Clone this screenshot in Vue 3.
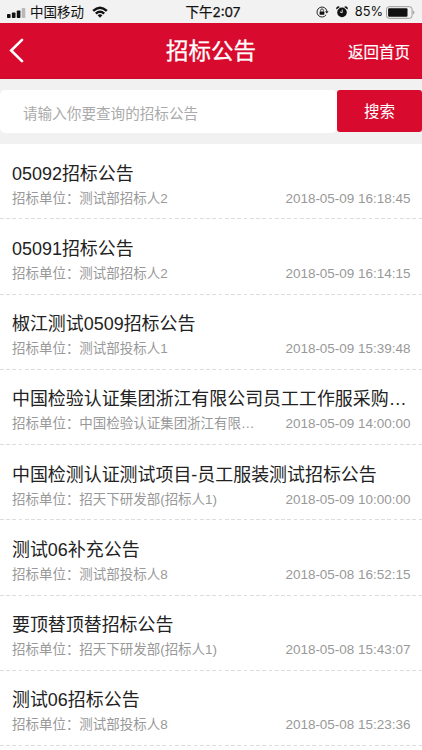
<script setup>
import { ref } from 'vue';

const keyword = ref('');

const notices = [
    { title: '05092招标公告', unit: '测试部招标人2', time: '2018-05-09 16:18:45' },
    { title: '05091招标公告', unit: '测试部招标人2', time: '2018-05-09 16:14:15' },
    { title: '椒江测试0509招标公告', unit: '测试部投标人1', time: '2018-05-09 15:39:48' },
    { title: '中国检验认证集团浙江有限公司员工工作服采购招标公告', unit: '中国检验认证集团浙江有限公司', time: '2018-05-09 14:00:00' },
    { title: '中国检测认证测试项目-员工服装测试招标公告', unit: '招天下研发部(招标人1)', time: '2018-05-09 10:00:00' },
    { title: '测试06补充公告', unit: '测试部投标人8', time: '2018-05-08 16:52:15' },
    { title: '要顶替顶替招标公告', unit: '招天下研发部(招标人1)', time: '2018-05-08 15:43:07' },
    { title: '测试06招标公告', unit: '测试部投标人8', time: '2018-05-08 15:23:36' },
];
</script>

<template>
    <div class="page" lang="zh-CN">
        <div class="status">
            <div class="status-side">
                <svg class="signal" width="19" height="10" viewBox="0 0 19 10">
                    <rect x="0" y="6" width="3.6" height="4" rx="0.8" />
                    <rect x="4.9" y="4.4" width="3.6" height="5.6" rx="0.8" />
                    <rect x="9.8" y="2.4" width="3.6" height="7.6" rx="0.8" />
                    <rect x="14.7" y="0" width="3.6" height="10" rx="0.8" fill="#b9b9b9" />
                </svg>
                <span class="carrier">中国移动</span>
                <svg class="wifi" width="16" height="12" viewBox="0 0 16 12">
                    <path d="M0.3 4.1Q8-3.1 15.7 4.1L14 5.8Q8 .2 2 5.8Z" />
                    <path d="M3 6.8Q8 2.3 13 6.8L11.3 8.4Q8 5.6 4.7 8.4Z" />
                    <path d="M5.6 9.3Q8 7.3 10.4 9.3L8 11.7Z" />
                </svg>
            </div>
            <span class="clock">下午2:07</span>
            <div class="status-side status-right">
                <svg width="13" height="12" viewBox="0 0 13 12">
                    <path d="M10.1 8.9A5 5 0 1 1 10.9 5" fill="none" stroke="#111" stroke-width="0.9" />
                    <path d="M9 5.2h3.6l-1.8 2.3z" />
                    <rect x="3.6" y="5.4" width="4.8" height="3.3" rx="0.4" />
                    <path d="M4.6 5.6V4.3a1.4 1.4 0 0 1 2.8 0v1.3" fill="none" stroke="#111" stroke-width="0.8" />
                </svg>
                <svg class="alarm" width="12" height="12" viewBox="0 0 12 12">
                    <circle cx="6" cy="6.4" r="4.8" />
                    <path d="M.5 3.4A2.1 2.1 0 0 1 3.8.9zM11.5 3.4A2.1 2.1 0 0 0 8.2.9z" />
                    <path d="M6.2 3.6v3.1L3.9 5.9" fill="none" stroke="#f2f2f2" stroke-width="0.9" />
                </svg>
                <span class="percent">85%</span>
                <svg class="battery" width="29" height="13" viewBox="0 0 29 13">
                    <rect x="0.5" y="0.7" width="25.6" height="11.6" rx="2.6" fill="none" stroke="#999" stroke-width="1" />
                    <rect x="2.1" y="2.2" width="19.4" height="8.6" rx="1" />
                    <path d="M27.2 4.6q1.2.6 1.2 1.9t-1.2 1.9z" fill="#999" />
                </svg>
            </div>
        </div>

        <header class="nav">
            <a class="back">
                <svg width="15" height="25" viewBox="0 0 15 25">
                    <path d="M13 1.8 2.2 12.5 13 23.2" fill="none" stroke="#fff" stroke-width="2.6" stroke-linecap="round" />
                </svg>
            </a>
            <h1>招标公告</h1>
            <a class="home">返回首页</a>
        </header>

        <form class="search" @submit.prevent>
            <input v-model="keyword" type="text" placeholder="请输入你要查询的招标公告" />
            <button type="submit">搜索</button>
        </form>

        <ul class="list">
            <li v-for="item in notices" :key="item.time" class="item">
                <h2>{{ item.title }}</h2>
                <div class="meta">
                    <span class="unit">招标单位：{{ item.unit }}</span>
                    <span class="time">{{ item.time }}</span>
                </div>
            </li>
        </ul>
    </div>
</template>

<style>
body {
    background: #fff;
    overflow: hidden;
}
</style>

<style scoped>
.page {
    height: 750px;
    overflow: hidden;
    background: #fff;
    font-family: "Liberation Sans", "Noto Sans CJK SC", sans-serif;
    color: #222;
}

.status {
    box-sizing: border-box;
    height: 23px;
    padding: 1px 7px 0;
    display: grid;
    grid-template-columns: 1fr auto 1fr;
    align-items: center;
    background: #f2f2f2;
    color: #111;
    font-size: 13.5px;
    line-height: 22px;
    white-space: nowrap;
}

.status svg {
    flex: none;
    fill: #111;
}

.status-side {
    display: flex;
    align-items: center;
}

.status-right {
    justify-content: flex-end;
}

.signal {
    margin-top: 2px;
}

.carrier {
    margin-left: 4px;
    padding-top: 1px;
    line-height: 21px;
}

.wifi {
    margin-left: 8px;
}

.clock {
    padding-left: 4px;
    font-family: Inter, "Noto Sans CJK SC", sans-serif;
    font-size: 13.5px;
    -webkit-text-stroke: 0.25px #111;
}

.alarm {
    margin-left: 7px;
}

.percent {
    margin-left: 7px;
    font-family: Inter, sans-serif;
    font-size: 12.8px;
}

.battery {
    margin-left: 3px;
}

.nav {
    box-sizing: border-box;
    height: 56px;
    padding: 0 12px 0 9px;
    display: grid;
    grid-template-columns: 1fr auto 1fr;
    align-items: center;
    background: #d80b2e;
    border-bottom: 1px solid #c40f2d;
    color: #fff;
}

.back {
    display: flex;
}

.nav h1 {
    margin: 0;
    padding: 2px 0 0 3px;
    font-size: 22.5px;
    font-weight: 400;
    line-height: 30px;
    -webkit-text-stroke: 0.3px #fff;
}

.home {
    justify-self: end;
    font-size: 15.5px;
    -webkit-text-stroke: 0.2px #fff;
}

.search {
    box-sizing: border-box;
    height: 65px;
    padding-top: 11px;
    display: flex;
    align-items: flex-start;
    background: #f1f1f1;
}

.search input {
    box-sizing: border-box;
    flex: 1;
    min-width: 0;
    height: 43px;
    padding: 4px 23px 0;
    border: 0;
    border-radius: 5px;
    outline: 0;
    background: #fff;
    font: 14.6px "Liberation Sans", "Noto Sans CJK SC", sans-serif;
}

.search input::placeholder {
    color: #aaa;
}

.search button {
    width: 85px;
    height: 41.5px;
    padding: 0 0 2px;
    border: 0;
    border-radius: 3px;
    background: #d80b2e;
    color: #fff;
    font: 15.5px "Liberation Sans", "Noto Sans CJK SC", sans-serif;
}

.list {
    margin: 0;
    padding: 0;
    list-style: none;
}

.item {
    box-sizing: border-box;
    height: 75.25px;
    padding: 15.5px 11.5px 0 12px;
    background: repeating-linear-gradient(90deg, #ddd 0 3.7px, transparent 3.7px 6.25px) 0 100% / 100% 1px no-repeat;
}

.item h2 {
    margin: 0;
    font-size: 17.95px;
    font-weight: 400;
    line-height: 28px;
    white-space: nowrap;
    overflow: hidden;
    text-overflow: ellipsis;
}

.meta {
    display: flex;
    justify-content: space-between;
    color: #999;
    font-size: 13.48px;
    line-height: 22px;
    white-space: nowrap;
}

.unit {
    max-width: 245px;
    overflow: hidden;
    text-overflow: ellipsis;
}
</style>
